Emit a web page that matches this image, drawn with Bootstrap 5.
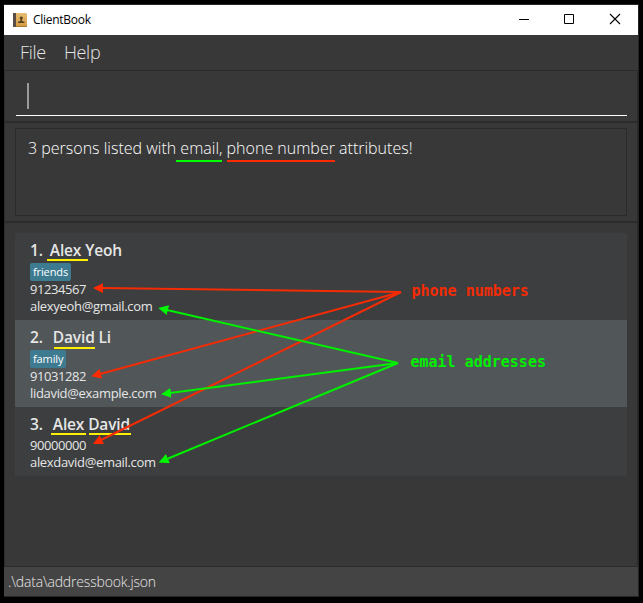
<!DOCTYPE html>
<html lang="en">
<head>
<meta charset="utf-8">
<meta name="viewport" content="width=device-width, initial-scale=1">
<title>ClientBook</title>
<link href="https://cdn.jsdelivr.net/npm/bootstrap@5.3.0/dist/css/bootstrap.min.css" rel="stylesheet">
<style>
body{background:#000;font-family:"Open Sans","Noto Sans",sans-serif;width:643px;height:603px;padding:4px 4px 6px 4px;overflow:hidden;line-height:1}
.app-window{width:635px;height:593px;background:#383838;border:1px solid #262626;border-left-color:#1c1c1c;border-width:1px 1px 1px 0}
.app-title{height:30px;background:#fff;color:#000;padding-left:9px}
.app-title .title-text{font-size:12px;letter-spacing:-.28px;margin-left:6px;line-height:30px}
.win-btn{width:46px;height:30px}
.menu-strip{height:35px;padding-left:16px;gap:18px;font-size:18px;font-weight:300;color:#e4e4e4;line-height:35px}
.menu-strip span{letter-spacing:-.3px}
.command-area{height:53px;border:1px solid #2b2b2b;border-bottom-width:2px;padding:9px 10px 0 11px}
.command-input{height:36px;border-bottom:1px solid #fff;padding:3px 0 0 11px}
.caret{width:2px;height:26px;background:#999}
.result-area{height:100px;border:solid #2b2b2b;border-width:0 1px 2px 1px;padding:5px 10px 0}
.result-box{height:88px;border:1px solid #2b2b2b;padding:8px 12px;font-size:16px;font-weight:300;color:#fff;line-height:22px}
.list-area{height:344px;border:1px solid #2b2b2b;border-top:0;padding:10px 10px 0}
.person{background:#3c3e3f;padding:8px 15px 0;height:87px;color:#e6e6e6;font-size:13px;border:0}
.person.alt{background:#515658}
.person.short{height:69px}
.person-name{font-size:15.5px;font-weight:600;line-height:18px;height:21px;letter-spacing:-.15px}
.person.short .person-name{height:22px}
.n1{margin-left:7px}.n2{margin-left:10px}.n3{margin-left:10px}
.person-tag{height:18px;line-height:18px;font-size:11px;letter-spacing:-.12px;background:#3e7b91;color:#fff;border-radius:2px;padding:0 3px;margin-top:1px}
.person-line{line-height:17px;height:17px;white-space:nowrap;letter-spacing:-.32px}
.person-line.phone{letter-spacing:-.43px}
.status-strip{height:29px;background:#444;color:#e8e8e8;font-size:14px;font-weight:300;letter-spacing:-.18px;line-height:30px;padding-left:4px}
.notes{position:absolute;left:0;top:0}
.notes text{font:bold 15px "DejaVu Sans Mono",monospace}
</style>
<script src="https://cdn.jsdelivr.net/npm/bootstrap@5.3.0/dist/js/bootstrap.bundle.min.js"></script>
</head>
<body class="position-relative">
<main class="app-window d-flex flex-column">
  <header class="app-title d-flex align-items-center flex-shrink-0">
    <svg width="14" height="14" viewBox="0 0 14 14"><defs><linearGradient id="bk" x2="0" y2="1"><stop stop-color="#e6bd72"/><stop offset="1" stop-color="#d49b40"/></linearGradient></defs><rect width="14" height="14" rx="1" fill="url(#bk)"/><path d="M0 0h3v14H0z" fill="#584b48"/><path d="M3 13h11v1H3z" fill="#a87930"/><path d="M8.300 3.500a1.500 1.500 0 0 1 .9 2.700L9 8l2.400.8V10h-6.400V8.800L7.500 8l-.2-1.800A1.500 1.500 0 0 1 8.300 3.500z" fill="#57411f"/></svg>
    <span class="title-text flex-grow-1">ClientBook</span>
    <svg class="win-btn" viewBox="0 0 46 30"><path d="M19 14.500h10" stroke="#000"/></svg>
    <svg class="win-btn" viewBox="0 0 46 30"><path d="M18.500 9.500h9v9h-9z" stroke="#000" fill="none"/></svg>
    <svg class="win-btn" viewBox="0 0 46 30"><path d="M18 9l10 10M28 9L18 19" stroke="#000" stroke-width="1.100"/></svg>
  </header>
  <nav class="menu-strip d-flex flex-shrink-0"><span>File</span><span>Help</span></nav>
  <section class="command-area flex-shrink-0"><div class="command-input"><div class="caret"></div></div></section>
  <section class="result-area flex-shrink-0"><div class="result-box">3 persons listed with email, phone number attributes!</div></section>
  <section class="list-area flex-shrink-0">
    <div class="d-flex flex-column">
      <article class="person d-flex flex-column align-items-start">
        <div class="person-name d-flex"><span>1.</span><span class="n1">Alex Yeoh</span></div>
        <span class="person-tag">friends</span>
        <div class="person-line phone">91234567</div><div class="person-line">alexyeoh@gmail.com</div>
      </article>
      <article class="person alt d-flex flex-column align-items-start">
        <div class="person-name d-flex"><span>2.</span><span class="n2">David Li</span></div>
        <span class="person-tag">family</span>
        <div class="person-line phone">91031282</div><div class="person-line">lidavid@example.com</div>
      </article>
      <article class="person short d-flex flex-column align-items-start">
        <div class="person-name d-flex"><span>3.</span><span class="n3">Alex David</span></div>
        <div class="person-line phone">90000000</div><div class="person-line">alexdavid@email.com</div>
      </article>
    </div>
  </section>
  <footer class="status-strip flex-shrink-0">.\data\addressbook.json</footer>
</main>
<svg class="notes" width="643" height="603" viewBox="0 0 643 603">
  <defs>
    <marker id="ar" markerUnits="userSpaceOnUse" markerWidth="11" markerHeight="10" refX="1" refY="5" orient="auto"><path d="M0 0L10 5L0 10z" fill="#ff2a00"/></marker>
    <marker id="ag" markerUnits="userSpaceOnUse" markerWidth="11" markerHeight="10" refX="1" refY="5" orient="auto"><path d="M0 0L10 5L0 10z" fill="#00f800"/></marker>
  </defs>
  <g fill="none" stroke-width="2">
    <path d="M176 161h46" stroke="#0f0"/><path d="M227 161h108" stroke="#ff2a00"/>
    <path d="M47 260h41M54 348h41M51 434h35M89 434h42" stroke="#fff000"/>
    <g stroke="#f52b05"><path d="M401 292L102 288.100" marker-end="url(#ar)"/><path d="M401 292L100 374" marker-end="url(#ar)"/><path d="M401 292L101 440" marker-end="url(#ar)"/></g>
    <g stroke="#00f000"><path d="M398 363L167 310" marker-end="url(#ag)"/><path d="M398 363L170 393" marker-end="url(#ag)"/><path d="M398 363L167 459" marker-end="url(#ag)"/></g>
  </g>
  <text x="411.5" y="295.5" fill="#f52b05">phone numbers</text>
  <text x="410.5" y="366.500" fill="#00f000">email addresses</text>
</svg>
</body>
</html>
